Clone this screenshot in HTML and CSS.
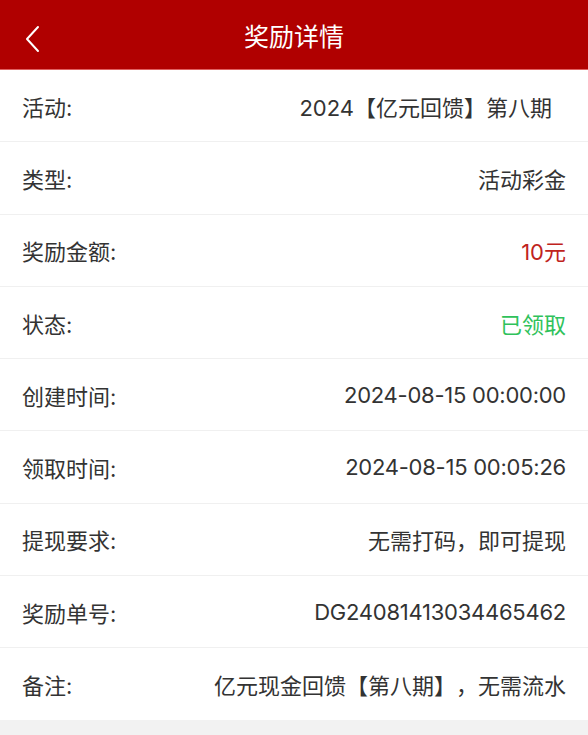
FILE: index.html
```html
<!DOCTYPE html>
<html lang="zh-CN">
<head>
    <meta charset="UTF-8">
    <meta name="viewport" content="width=device-width, initial-scale=1.0">
    <title>奖励详情</title>
    <link rel="stylesheet" href="styles.css">
</head>
<body>

    <!-- Header -->
    <div class="header">
        <span class="back">
            <svg width="16" height="28" viewBox="0 0 16 28">
                <polyline points="13,2 2,14 13,26" fill="none" stroke="#fff" stroke-width="2" stroke-linecap="round" stroke-linejoin="round"/>
            </svg>
        </span>
        <h1>奖励详情</h1>
    </div>

    <!-- Detail list -->
    <div class="list">
        <div class="row"><span class="label">活动:</span><span class="value pad">2024【亿元回馈】第八期</span></div>
        <div class="row"><span class="label">类型:</span><span class="value">活动彩金</span></div>
        <div class="row"><span class="label">奖励金额:</span><span class="value red">10元</span></div>
        <div class="row"><span class="label">状态:</span><span class="value green">已领取</span></div>
        <div class="row"><span class="label">创建时间:</span><span class="value num">2024-08-15 00:00:00</span></div>
        <div class="row"><span class="label">领取时间:</span><span class="value num">2024-08-15 00:05:26</span></div>
        <div class="row"><span class="label">提现要求:</span><span class="value">无需打码，即可提现</span></div>
        <div class="row"><span class="label">奖励单号:</span><span class="value num">DG24081413034465462</span></div>
        <div class="row"><span class="label">备注:</span><span class="value">亿元现金回馈【第八期】，无需流水</span></div>
    </div>

</body>
</html>
```

FILE: styles.css
```css
body {
    margin: 0;
    font-family: Inter, "Noto Sans CJK SC", sans-serif;
    background-color: #f2f2f2;
    color: #333;
}
.header {
    position: relative;
    height: 69px;
    background: #b00000;
    border-bottom: 1px solid #e06060;
    display: flex;
    align-items: center;
    justify-content: center;
}
.header h1 {
    margin: 0;
    font-size: 25px;
    font-weight: normal;
    color: #fff;
}
.back {
    position: absolute;
    left: 25px;
    top: 25px;
}
.list {
    background: white;
}
.row {
    height: 71.3px;
    border-bottom: 1px solid #f0f0f0;
    display: flex;
    align-items: center;
    justify-content: space-between;
    padding: 0 22px;
    font-size: 22px;
}
.row:last-child {
    border-bottom: none;
}
.label {
    color: #333;
}
.value {
    color: #333;
    text-spacing-trim: space-all;
}
.num {
    letter-spacing: -0.25px;
}
.pad {
    padding-right: 14px;
}
.red {
    color: #c0231c;
}
.green {
    color: #2fc25b;
}
```
